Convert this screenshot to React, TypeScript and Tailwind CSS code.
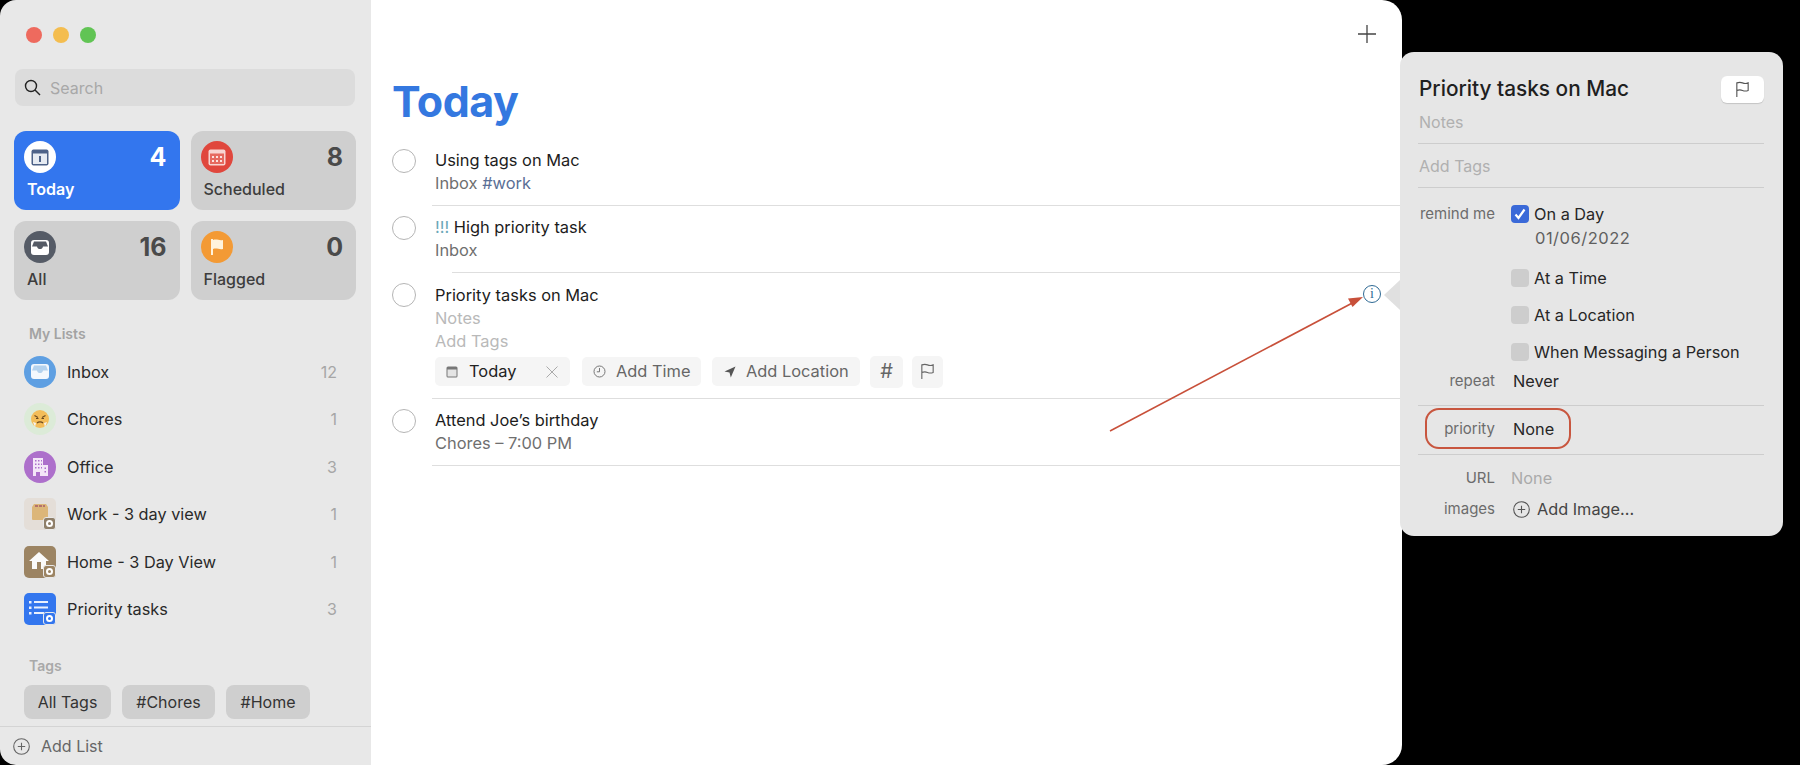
import React from "react";

const Badge = ({ color }: { color: string }) => (
  <span className="absolute right-0 bottom-0 flex h-[13px] w-[13px] items-center justify-center rounded-[3px] border border-[#e8e8e8]" style={{ backgroundColor: color }}>
    <span className="h-[7px] w-[7px] rounded-full border-2 border-white" />
  </span>
);

const InboxGlyph = ({ fill, inner }: { fill: string; inner: string }) => (
  <svg width="20" height="17" viewBox="0 0 20 17">
    <path d="M4 1h12a3 3 0 0 1 3 3v9a3 3 0 0 1-3 3H4a3 3 0 0 1-3-3V4a3 3 0 0 1 3-3z" fill={fill} />
    <path d="M4 2.500h12l2 5h-5c-.5 2-1.500 2.500-3 2.500S7.500 9.500 7 7.500H2z" fill={inner} />
  </svg>
);

const FlagIcon = ({ color = "#555", size = 18 }: { color?: string; size?: number }) => (
  <svg width={size} height={size} viewBox="0 0 18 18" fill="none" stroke={color} strokeWidth="1.2">
    <path d="M3 17V2c3-1 4-.8 6 0s4 .8 6 0v8c-2 .8-4 .8-6 0s-3-1-6 0" />
  </svg>
);

const PlusCircle = ({ color = "#666" }: { color?: string }) => (
  <svg width="17" height="17" viewBox="0 0 17 17" fill="none" stroke={color} strokeWidth="1.1">
    <circle cx="8.500" cy="8.500" r="7.800" />
    <path d="M8.500 4.800v7.400M4.800 8.500h7.400" />
  </svg>
);

const Card = ({ icon, bg, count, label, active }: { icon: React.ReactNode; bg: string; count: number; label: string; active?: boolean }) => (
  <div className={active ? "h-[79px] rounded-[12px] bg-[#3376ee] pt-[10px] pl-[10px] pr-[13px]" : "h-[79px] rounded-[12px] bg-[#cfcfcf] pt-[10px] pl-[10px] pr-[13px]"}>
    <div className="flex items-start justify-between">
      <span className="flex h-[32px] w-[32px] items-center justify-center rounded-full" style={{ backgroundColor: bg }}>{icon}</span>
      <span className={active ? "text-[25px] leading-[32px] font-bold text-white" : "text-[25px] leading-[32px] font-bold text-[#4a4a4a]"}>{count}</span>
    </div>
    <div className={active ? "mt-[5px] pl-[3px] text-[16px] leading-[22px] font-semibold text-white" : "mt-[5px] pl-[3px] text-[16px] leading-[22px] font-medium text-[#3d3d3d]"}>{label}</div>
  </div>
);

const ListRow = ({ icon, name, count }: { icon: React.ReactNode; name: string; count: number }) => (
  <div className="flex h-[47.5px] items-center pl-[24px] pr-[34px]">
    <span className="relative flex h-[32px] w-[32px] shrink-0 items-center justify-center">{icon}</span>
    <span className="ml-[11px] flex-1 text-[16.3px] text-[#2a2a2a]">{name}</span>
    <span className="text-[16px] text-[#a6a6a6]">{count}</span>
  </div>
);

const Sidebar = () => (
  <aside className="flex h-full w-[371px] shrink-0 flex-col rounded-tl-[16px] rounded-bl-[16px] bg-[#e8e8e8]">
    <div className="flex gap-[11px] pt-[27px] pl-[26px]">
      <span className="h-4 w-4 rounded-full bg-[#ee6a5e]" />
      <span className="h-4 w-4 rounded-full bg-[#f4bd4f]" />
      <span className="h-4 w-4 rounded-full bg-[#61c454]" />
    </div>
    <div className="mt-[26px] ml-[15px] flex h-[37px] w-[340px] items-center rounded-[8px] bg-[#dcdcdc] pl-[9px]">
      <svg width="17" height="17" viewBox="0 0 17 17" fill="none" stroke="#222" strokeWidth="1.400">
        <circle cx="7" cy="7" r="5.500" />
        <path d="M11 11l5 5" />
      </svg>
      <span className="ml-[9px] text-[16px] text-[#a8a8a8]">Search</span>
    </div>
    <div className="mt-[25px] ml-[14px] grid w-[342px] grid-cols-2 gap-[11px]">
      <Card
        active
        bg="#ffffff"
        count={4}
        label="Today"
        icon={
          <svg width="18" height="17" viewBox="0 0 18 17">
            <rect x="0.500" y="0.500" width="17" height="16" rx="2" fill="#4d6288" />
            <rect x="2" y="4.500" width="14" height="10.500" fill="#e6ebf2" />
            <rect x="8" y="7" width="2" height="6" fill="#4d6288" />
          </svg>
        }
      />
      <Card
        bg="#e0473d"
        count={8}
        label="Scheduled"
        icon={
          <svg width="18" height="17" viewBox="0 0 18 17">
            <rect x="0.500" y="0.500" width="17" height="16" rx="2" fill="#f8d5d1" />
            <rect x="2" y="4.500" width="14" height="10.500" fill="#e66a5f" />
            <path d="M4 7h2v2H4zM8 7h2v2H8zM12 7h2v2h-2zM4 11h2v2H4zM8 11h2v2H8zM12 11h2v2h-2z" fill="#fbe3e0" />
          </svg>
        }
      />
      <Card bg="#555b66" count={16} label="All" icon={<InboxGlyph fill="#ffffff" inner="#555b66" />} />
      <Card
        bg="#f39a35"
        count={0}
        label="Flagged"
        icon={
          <svg width="14" height="18" viewBox="0 0 14 18" fill="#fff3dc">
            <rect x="1" y="1" width="2" height="16" />
            <path d="M3 2c4-1.500 6 1 10 0v9c-4 1-6-1.500-10 0z" />
          </svg>
        }
      />
    </div>
    <div className="mt-[27px] h-[14px] pl-[29px] text-[14px] leading-[14px] font-semibold text-[#a3a3a3]">My Lists</div>
    <div className="mt-[7px]">
      <ListRow name="Inbox" count={12} icon={<span className="flex h-[32px] w-[32px] items-center justify-center rounded-full bg-[#5e9fe2]"><InboxGlyph fill="#f4f8fd" inner="#b4d2ee" /></span>} />
      <ListRow
        name="Chores"
        count={1}
        icon={
          <span className="flex h-[32px] w-[32px] items-center justify-center rounded-full bg-[#dcebd8]">
            <svg width="20" height="20" viewBox="0 0 20 20">
              <circle cx="10" cy="10" r="9" fill="#f3bd5a" />
              <path d="M4.500 6.500l3.500 2M15.500 6.500l-3.500 2M6 9.500h2.500M11.500 9.500H14" stroke="#6b4a1f" strokeWidth="1.100" fill="none" />
              <path d="M7 14c1.500-1.500 4.500-1.500 6 0" stroke="#6b4a1f" strokeWidth="1.200" fill="none" />
              <path d="M3 13l3 1-1 4zM17 13l-3 1 1 4z" fill="#f4f4f4" />
            </svg>
          </span>
        }
      />
      <ListRow
        name="Office"
        count={3}
        icon={
          <span className="flex h-[32px] w-[32px] items-center justify-center rounded-full bg-[#ad6fcb]">
            <svg width="18" height="20" viewBox="0 0 18 20">
              <path d="M2 1h10v18H2zM12 8h5v11h-5z" fill="#f4e6f8" />
              <path d="M4 3h1.500v1.500H4zM7 3h1.500v1.500H7zM10 3h1v1.500h-1zM4 6.500h1.500V8H4zM7 6.500h1.500V8H7zM10 6.500h1V8h-1zM4 10h1.500v1.500H4zM7 10h1.500v1.500H7zM10 10h1v1.500h-1zM5 15h4v4H5zM13.500 10.500H15V12h-1.500zM13.500 14H15v1.500h-1.500z" fill="#ad6fcb" />
            </svg>
          </span>
        }
      />
      <ListRow
        name="Work - 3 day view"
        count={1}
        icon={
          <span className="relative flex h-[32px] w-[32px] items-center justify-center rounded-[5px] bg-[#e4ded8]">
            <svg width="20" height="18" viewBox="0 0 20 18" className="mb-[4px]">
              <path d="M2 4l2-3h12l2 3v12a1 1 0 0 1-1 1H3a1 1 0 0 1-1-1z" fill="#dcb679" />
              <path d="M5 2h3v2H5zM9 2h3v2H9zM13 2h2v2h-2z" fill="#b5726b" />
            </svg>
            <Badge color="#8f7f69" />
          </span>
        }
      />
      <ListRow
        name="Home - 3 Day View"
        count={1}
        icon={
          <span className="relative flex h-[32px] w-[32px] items-center justify-center rounded-[5px] bg-[#9c8463]">
            <svg width="22" height="20" viewBox="0 0 22 20" className="mb-[1px] mr-[2px]">
              <path d="M11 1L1 10h3v8h14v-8h3z" fill="#fafafa" />
              <rect x="9" y="11" width="4" height="7" fill="#9c8463" />
            </svg>
            <Badge color="#9c8463" />
          </span>
        }
      />
      <ListRow
        name="Priority tasks"
        count={3}
        icon={
          <span className="relative flex h-[32px] w-[32px] items-center justify-center rounded-[5px] bg-[#3376ee]">
            <svg width="20" height="16" viewBox="0 0 20 16" className="mb-[2px] mr-[2px]" fill="#e9f0fd">
              <path d="M0 1h2.500v2.500H0zM0 6.500h2.500V9H0zM0 12h2.500v2.500H0zM5 1h14v2H5zM5 6.500h14v2H5zM5 12h10v2H5z" />
            </svg>
            <Badge color="#3376ee" />
          </span>
        }
      />
    </div>
    <div className="mt-[26px] h-[14px] pl-[29px] text-[14px] leading-[14px] font-semibold text-[#a9a9a9]">Tags</div>
    <div className="mt-[12px] flex gap-[11px] pl-[24px]">
      {[
        ["All Tags", "w-[87px]"],
        ["#Chores", "w-[93px]"],
        ["#Home", "w-[84px]"],
      ].map(([t, w]) => (
        <span key={t} className={`${w} flex h-[34px] items-center justify-center rounded-[8px] bg-[#cfcfcf] text-[16px] text-[#333]`}>{t}</span>
      ))}
    </div>
    <div className="mt-[7px] flex flex-1 items-center border-t border-[#d4d4d4] pl-[13px]">
      <PlusCircle />
      <span className="ml-[11px] text-[16px] text-[#666]">Add List</span>
    </div>
  </aside>
);

const Circle = () => <span className="mt-[10px] ml-[21px] h-[24px] w-[24px] shrink-0 rounded-full border border-[#b5b5b5]" />;

const Chip = ({ className, children }: { className: string; children: React.ReactNode }) => (
  <span className={`flex shrink-0 items-center rounded-[5px] bg-[#f5f5f5] text-[16.4px] whitespace-nowrap text-[#666] ${className}`}>{children}</span>
);

const Task = ({ children }: { children: React.ReactNode }) => (
  <div className="flex">
    <Circle />
    <div className="min-w-0 flex-1 pt-[10px] pb-[10px] pl-[19px] text-[16.4px] leading-[23px] text-[#1c1c1c]">{children}</div>
  </div>
);

const Divider = ({ inset }: { inset?: boolean }) => <div className={inset ? "ml-[81px] h-px bg-[#dedede]" : "ml-[61px] h-px bg-[#dedede]"} />;

const Main = () => (
  <main className="h-full w-[1031px] shrink-0 rounded-tr-[20px] rounded-br-[20px] bg-white">
    <div className="flex h-[72px] items-start justify-end pt-[25px] pr-[26px]">
      <svg width="18" height="18" viewBox="0 0 18 18" stroke="#444" strokeWidth="1.300">
        <path d="M9 0v18M0 9h18" />
      </svg>
    </div>
    <h1 className="h-[67px] pl-[21px] text-[43px] leading-[59px] font-bold tracking-[-0.5px] text-[#3478e0]">Today</h1>
    <Task>
      <div>Using tags on Mac</div>
      <div className="text-[#6f6f6f]">Inbox <span className="text-[#5a6f96]">#work</span></div>
    </Task>
    <Divider />
    <Task>
      <div><span className="text-[#6ba7b8]">!!!</span> High priority task</div>
      <div className="text-[#6f6f6f]">Inbox</div>
    </Task>
    <Divider inset />
    <div className="flex">
      <Circle />
      <div className="relative flex-1 pt-[11px] pb-[12px] pl-[19px] text-[16.4px] leading-[23px]">
        <div className="text-[#1c1c1c]">Priority tasks on Mac</div>
        <div className="text-[#b9b9b9]">Notes</div>
        <div className="text-[#b9b9b9]">Add Tags</div>
        <div className="mt-[4px] flex h-[29px] items-center">
          <Chip className="h-[29px] w-[135px] pl-[11px] pr-[11px]">
            <svg width="12" height="12" viewBox="0 0 12 12">
              <rect x="0.500" y="0.500" width="11" height="11" rx="1.500" fill="#777" />
              <rect x="1.500" y="3.500" width="9" height="7" fill="#e4e4e4" />
            </svg>
            <span className="ml-[11px] text-[#222]">Today</span>
            <svg width="14" height="14" viewBox="0 0 14 14" stroke="#aaa" strokeWidth="1" className="ml-auto">
              <path d="M1.500 1.500l11 11M12.500 1.500l-11 11" />
            </svg>
          </Chip>
          <Chip className="ml-[12px] h-[29px] w-[119px] pl-[11px]">
            <svg width="13" height="13" viewBox="0 0 13 13" fill="none" stroke="#777" strokeWidth="1">
              <circle cx="6.500" cy="6.500" r="5.500" />
              <path d="M6.500 3v3.800H3.800" />
            </svg>
            <span className="ml-[10px]">Add Time</span>
          </Chip>
          <Chip className="ml-[11px] h-[29px] w-[148px] pl-[12px]">
            <svg width="12" height="12" viewBox="0 0 12 12" fill="#555">
              <path d="M11.500.500L6.800 11.500 5.500 6.500.500 5.500z" />
            </svg>
            <span className="ml-[10px]">Add Location</span>
          </Chip>
          <Chip className="ml-[10px] h-[32px] w-[33px] justify-center text-[20px]">#</Chip>
          <Chip className="ml-[9px] h-[32px] w-[31px] justify-center"><FlagIcon color="#666" size={17} /></Chip>
        </div>
        <span className="absolute top-[12px] right-[21px] flex h-[18px] w-[18px] items-center justify-center rounded-full border border-[#2f6a94] font-['Liberation_Serif',serif] text-[14px] leading-none text-[#2f6a94]">i</span>
      </div>
    </div>
    <Divider />
    <Task>
      <div>Attend Joe’s birthday</div>
      <div className="text-[#6f6f6f]">Chores – 7:00 PM</div>
    </Task>
    <Divider />
  </main>
);

const Row = ({ label, className, children }: { label: string; className: string; children: React.ReactNode }) => (
  <div className={`flex h-[20px] items-center ${className}`}>
    <span className="w-[77px] text-right text-[15px] text-[#6c6c6c]">{label}</span>
    <div className="ml-[16px] flex items-center text-[16.3px] text-[#262626]">{children}</div>
  </div>
);

const Check = ({ on }: { on?: boolean }) => (
  <span className={on ? "mr-[5px] flex h-[18px] w-[18px] items-center justify-center rounded-[4px] bg-[#3a69d8]" : "mr-[5px] h-[18px] w-[18px] rounded-[4px] bg-[#cdcdcd]"}>
    {on && (
      <svg width="14" height="14" viewBox="0 0 14 14" fill="none" stroke="#fff" strokeWidth="2.200">
        <path d="M2.500 7.500l3 3.500 6-8.500" />
      </svg>
    )}
  </span>
);

const Line = ({ className }: { className: string }) => <div className={`h-px bg-[#cdcdcd] ${className}`} />;

const Popover = () => (
  <div className="absolute top-[52px] left-[1400px] h-[484px] w-[383px] rounded-[14px] bg-[#e6e6e6] pt-[24px] pr-[19px] pl-[18px]">
    <span className="absolute top-[228px] left-[-16px] h-0 w-0 border-y-[15px] border-r-[16px] border-y-transparent border-r-[#e0e0e0]" />
    <div className="flex h-[26px] items-center justify-between pl-[1px]">
      <span className="text-[20.8px] font-medium text-[#1f1f1f]">Priority tasks on Mac</span>
      <span className="flex h-[27px] w-[43px] items-center justify-center rounded-[6px] bg-white shadow-[0_1px_1px_rgba(0,0,0,0.15)]"><FlagIcon color="#555" size={17} /></span>
    </div>
    <div className="mt-[10px] h-[20px] pl-[1px] text-[16px] leading-[20px] text-[#b0b0b0]">Notes</div>
    <Line className="mt-[11px]" />
    <div className="mt-[12px] h-[20px] pl-[1px] text-[16px] leading-[20px] text-[#b0b0b0]">Add Tags</div>
    <Line className="mt-[11px]" />
    <Row label="remind me" className="mt-[16px]"><Check on />On a Day</Row>
    <div className="mt-[4px] h-[20px] pl-[117px] text-[16.5px] leading-[20px] tracking-[0.5px] text-[#5f5f5f]">01/06/2022</div>
    <Row label="" className="mt-[20px]"><Check />At a Time</Row>
    <Row label="" className="mt-[17px]"><Check />At a Location</Row>
    <Row label="" className="mt-[17px]"><Check />When Messaging a Person</Row>
    <Row label="repeat" className="mt-[9px]"><span className="ml-[2px]">Never</span></Row>
    <Line className="mt-[14px]" />
    <Row label="priority" className="mt-[13px]"><span className="ml-[2px]">None</span></Row>
    <Line className="mt-[15px]" />
    <Row label="URL" className="mt-[13px]"><span className="text-[#aaaaaa]">None</span></Row>
    <Row label="images" className="mt-[11px]">
      <span className="ml-[2px] flex items-center text-[#444]"><PlusCircle color="#555" /><span className="ml-[7px]">Add Image...</span></span>
    </Row>
    <span className="absolute top-[356px] left-[25px] h-[41px] w-[146px] rounded-[14px] border-2 border-[#c8563f]" />
  </div>
);

export default function App() {
  return (
    <div className="relative flex h-[765px] w-[1800px] overflow-hidden bg-black font-['Inter','Liberation_Sans',sans-serif]">
      <Sidebar />
      <Main />
      <Popover />
      <svg className="absolute top-[286px] left-[1100px]" width="270" height="160" viewBox="0 0 270 160" fill="none">
        <path d="M10 145L258 14" stroke="#c8503a" strokeWidth="1.600" />
        <path d="M263 11l-15 1.500 4.500 8.500z" fill="#c8503a" />
      </svg>
    </div>
  );
}
